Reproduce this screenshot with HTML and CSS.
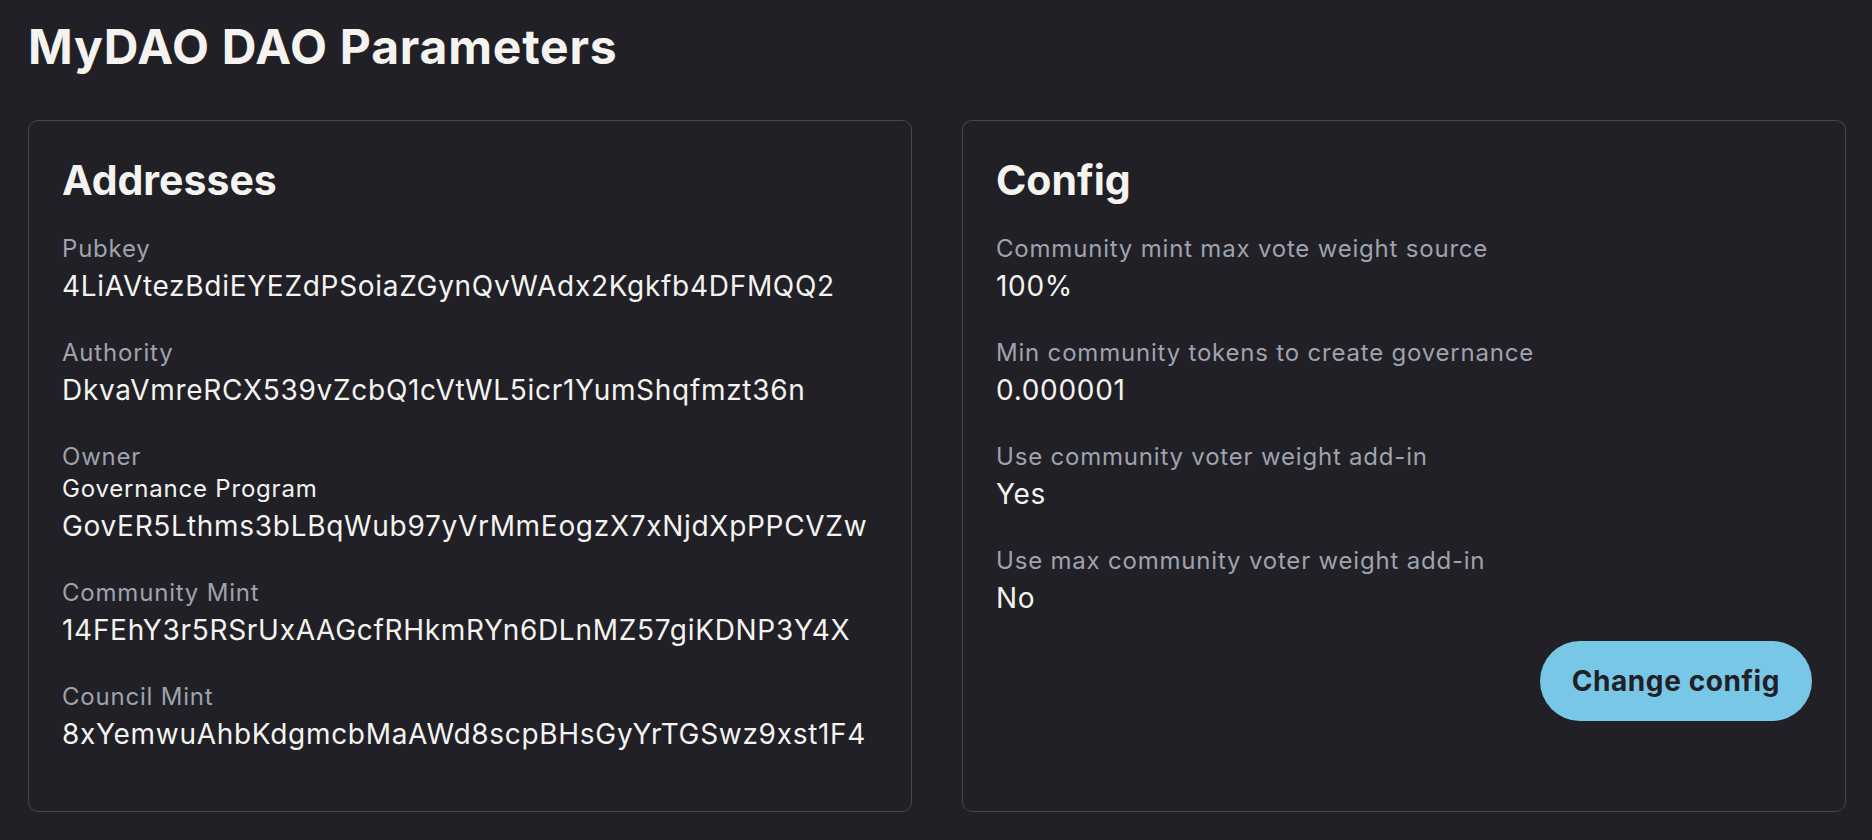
FILE: index.html
```html
<!DOCTYPE html>
<html lang="en">
<head>
<meta charset="utf-8">
<title>MyDAO DAO Parameters</title>
<link rel="stylesheet" href="styles.css">
</head>
<body>
<main class="page">
  <h1 class="page-title">MyDAO DAO Parameters</h1>
  <div class="cards">
    <section class="card">
      <h2 class="card-title">Addresses</h2>
      <div class="fields">
        <div class="item">
          <div class="label">Pubkey</div>
          <div class="value">4LiAVtezBdiEYEZdPSoiaZGynQvWAdx2Kgkfb4DFMQQ2</div>
        </div>
        <div class="item">
          <div class="label">Authority</div>
          <div class="value">DkvaVmreRCX539vZcbQ1cVtWL5icr1YumShqfmzt36n</div>
        </div>
        <div class="item">
          <div class="label">Owner</div>
          <div class="sub">Governance Program</div>
          <div class="value">GovER5Lthms3bLBqWub97yVrMmEogzX7xNjdXpPPCVZw</div>
        </div>
        <div class="item">
          <div class="label">Community Mint</div>
          <div class="value">14FEhY3r5RSrUxAAGcfRHkmRYn6DLnMZ57giKDNP3Y4X</div>
        </div>
        <div class="item">
          <div class="label">Council Mint</div>
          <div class="value">8xYemwuAhbKdgmcbMaAWd8scpBHsGyYrTGSwz9xst1F4</div>
        </div>
      </div>
    </section>
    <section class="card">
      <h2 class="card-title">Config</h2>
      <div class="fields">
        <div class="item">
          <div class="label">Community mint max vote weight source</div>
          <div class="value">100%</div>
        </div>
        <div class="item">
          <div class="label">Min community tokens to create governance</div>
          <div class="value">0.000001</div>
        </div>
        <div class="item">
          <div class="label">Use community voter weight add-in</div>
          <div class="value">Yes</div>
        </div>
        <div class="item">
          <div class="label">Use max community voter weight add-in</div>
          <div class="value">No</div>
        </div>
      </div>
      <div class="actions">
        <button class="btn" type="button">Change config</button>
      </div>
    </section>
  </div>
</main>
</body>
</html>
```

FILE: styles.css
```css
html, body {
  margin: 0;
  padding: 0;
  background: #202026;
}

body {
  font-family: Inter, "Noto Sans", "Liberation Sans", sans-serif;
  color: #f4f3ef;
}

.page {
  padding: 18px 26px 0 28px;
}

.page-title {
  margin: 0 0 44px 0;
  font-size: 48px;
  line-height: 58px;
  font-weight: 700;
  letter-spacing: 0.8px;
  color: #f4f3ef;
}

.cards {
  display: grid;
  grid-template-columns: 1fr 1fr;
  gap: 50px;
  align-items: stretch;
}

.card {
  border: 1px solid #45484e;
  border-radius: 10px;
  padding: 34px 33px 56px 33px;
}

.card-title {
  margin: 0 0 27px 0;
  font-size: 41px;
  line-height: 50.8px;
  font-weight: 700;
  color: #f4f3ef;
}

.fields {
  display: flex;
  flex-direction: column;
  gap: 30px;
}

.label {
  font-size: 24px;
  line-height: 32px;
  letter-spacing: 0.8px;
  color: #9ea3ad;
}

.sub {
  font-size: 24px;
  line-height: 32px;
  letter-spacing: 0.8px;
  color: #f4f3ef;
}

.value {
  font-size: 28px;
  line-height: 42px;
  letter-spacing: 0.7px;
  color: #f4f3ef;
}

.actions {
  display: flex;
  justify-content: flex-end;
  margin-top: 22px;
}

.btn {
  font-family: inherit;
  font-size: 28px;
  line-height: 42px;
  font-weight: 700;
  letter-spacing: 0.6px;
  color: #202026;
  background: #78c7e7;
  border: none;
  border-radius: 40px;
  padding: 19px 32px;
  cursor: pointer;
}
```
